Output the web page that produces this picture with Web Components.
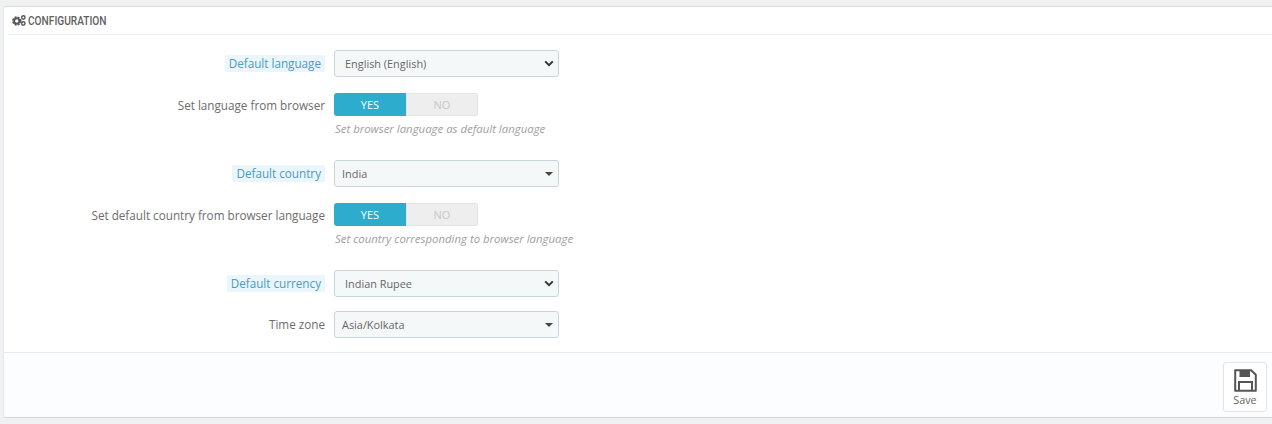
<!DOCTYPE html>
<html>
<head>
<meta charset="utf-8">
<style>
  html, body { margin: 0; padding: 0; background: #eff1f2; }
  body { font-family: "Open Sans", sans-serif; font-size: 12px; color: #666; height: 424px; overflow: hidden; }
</style>
</head>
<body>
<config-panel>
  <span slot="title">Configuration</span>
  <form-row label="Default language" tip><form-select value="English (English)" native></form-select></form-row>
  <form-row label="Set language from browser" help="Set browser language as default language"><yes-no></yes-no></form-row>
  <form-row label="Default country" tip><form-select value="India"></form-select></form-row>
  <form-row label="Set default country from browser language" help="Set country corresponding to browser language"><yes-no></yes-no></form-row>
  <form-row label="Default currency" tip tight><form-select value="Indian Rupee" native></form-select></form-row>
  <form-row label="Time zone"><form-select value="Asia/Kolkata"></form-select></form-row>
  <save-button slot="footer"></save-button>
</config-panel>

<script>
class ConfigPanel extends HTMLElement {
  constructor () {
    super();
    this.attachShadow({ mode: 'open' }).innerHTML = `
      <style>
        :host { display: block; margin: 6px 0 0 3px; height: 412px; box-sizing: border-box; background: #fff;
          border: 1px solid #e6e9ea; border-top-color: #d5dfe3; border-right: 0; border-bottom-color: #d3d6d8; border-radius: 3px 0 0 3px;
          overflow: hidden; }
        header { display: flex; align-items: center; gap: 2px; height: 27px; margin-left: 4px; padding-left: 4px;
          border-bottom: 1px solid #eeeff0; font-family: Roboto, sans-serif; font-weight: 500;
          font-size: 13px; text-transform: uppercase; color: #5f5f5f; }
        header svg { flex: none; }
        .title { display: inline-block; transform: scaleX(.78); transform-origin: left center; white-space: nowrap; }
        main { height: 317px; box-sizing: border-box; padding-top: 15px; }
        footer { height: 65px; box-sizing: border-box; background: #fcfdfe; border-top: 1px solid #e9eaeb;
          display: flex; justify-content: flex-end; padding: 9px 5px 0 0; }
      </style>
      <header>
        <svg width="14" height="11" viewBox="0 0 14 11">
          <g fill="none" stroke="#555">
            <circle cx="4.800" cy="6" r="3.500" stroke-width="2.400" stroke-dasharray="1.800 1"/>
            <circle cx="4.800" cy="6" r="2.600" stroke-width="1.800"/>
            <circle cx="11.300" cy="2.500" r="1.700" stroke-width="1.400"/>
            <circle cx="11.300" cy="8.500" r="1.700" stroke-width="1.400"/>
          </g>
        </svg>
        <span class="title"><slot name="title"></slot></span>
      </header>
      <main><slot></slot></main>
      <footer><slot name="footer"></slot></footer>`;
  }
}
customElements.define('config-panel', ConfigPanel);

class FormRow extends HTMLElement {
  constructor () {
    super();
    const help = this.getAttribute('help');
    this.attachShadow({ mode: 'open' }).innerHTML = `
      <style>
        :host { display: grid; grid-template-columns: 321px 1fr; column-gap: 9px; margin-bottom: 16px; }
        :host([help]) { margin-bottom: 23px; }
        :host([tight]) { margin-bottom: 14px; }
        label { justify-self: end; align-self: start; line-height: 17px; margin-top: 5px; font-size: 11.7px; color: #6c6c6c; white-space: nowrap; }
        :host([help]) label { margin-top: 4px; }
        :host([tip]) label span { display: block; background: #eaf6fb; color: #4a9cc0; padding: 0 4px; border-radius: 2px; }
        .help { grid-column: 2; margin: 5px 0 0 1px; font-size: 11.4px; line-height: 16px; font-style: italic; color: #a0a0a0; white-space: nowrap; }
      </style>
      <label><span></span></label>
      <div><slot></slot></div>
      ${help ? '<div class="help"></div>' : ''}`;
    this.shadowRoot.querySelector('span').textContent = this.getAttribute('label');
    if (help) this.shadowRoot.querySelector('.help').textContent = help;
  }
}
customElements.define('form-row', FormRow);

class FormSelect extends HTMLElement {
  constructor () {
    super();
    const native = this.hasAttribute('native');
    this.attachShadow({ mode: 'open' }).innerHTML = `
      <style>
        :host { display: flex; align-items: center; justify-content: space-between; width: 225px; height: 27px;
          box-sizing: border-box; background: #f5f8f9; border: 1px solid #c7d6db; border-radius: 3px;
          font-size: 10.9px; color: #666; white-space: nowrap; padding: 0 ${native ? '4px 0 10px' : '5px 0 7px'}; }
        svg { display: block; flex: none; }
      </style>
      <span></span>
      ${native
        ? '<svg width="10" height="7" viewBox="0 0 10 7"><path d="M1.200 1.400 5 5.200 8.800 1.400" fill="none" stroke="#333" stroke-width="2"/></svg>'
        : '<svg width="8" height="4" viewBox="0 0 8 4"><path d="M0 0h8L4 4z" fill="#444"/></svg>'}`;
    this.shadowRoot.querySelector('span').textContent = this.getAttribute('value');
  }
}
customElements.define('form-select', FormSelect);

class YesNo extends HTMLElement {
  constructor () {
    super();
    this.attachShadow({ mode: 'open' }).innerHTML = `
      <style>
        :host { display: flex; width: 144px; height: 23px; box-sizing: border-box; border-radius: 3px; overflow: hidden;
          font-size: 11px; line-height: 23px; text-align: center; }
        div { width: 72px; }
        .on { background: #2eacce; color: #fff; }
        .off { background: #eee; color: #c7c7c7; box-shadow: inset 0 0 0 1px #e4e4e4; }
      </style>
      <div class="on">YES</div><div class="off">NO</div>`;
  }
}
customElements.define('yes-no', YesNo);

class SaveButton extends HTMLElement {
  constructor () {
    super();
    this.attachShadow({ mode: 'open' }).innerHTML = `
      <style>
        :host { display: flex; flex-direction: column; align-items: center; width: 44px; height: 50px; box-sizing: border-box;
          background: #fff; border: 1px solid #e3e5e7; border-radius: 3px; padding-top: 6px; font-size: 10.800px; line-height: 14px; color: #666; }
        svg { display: block; margin-bottom: 1px; }
      </style>
      <svg width="23" height="23" viewBox="0 0 23 23">
        <path d="M1.200 1.200h16l4.600 4.600v16H1.200z" fill="none" stroke="#555" stroke-width="2" stroke-linejoin="round"/>
        <path d="M5.500 1.500h10.500v6.500H5.500z" fill="#555"/>
        <path d="M5 21.500v-8.500h13v8.500" fill="none" stroke="#555" stroke-width="2"/>
      </svg>
      <span>Save</span>`;
  }
}
customElements.define('save-button', SaveButton);
</script>
</body>
</html>
